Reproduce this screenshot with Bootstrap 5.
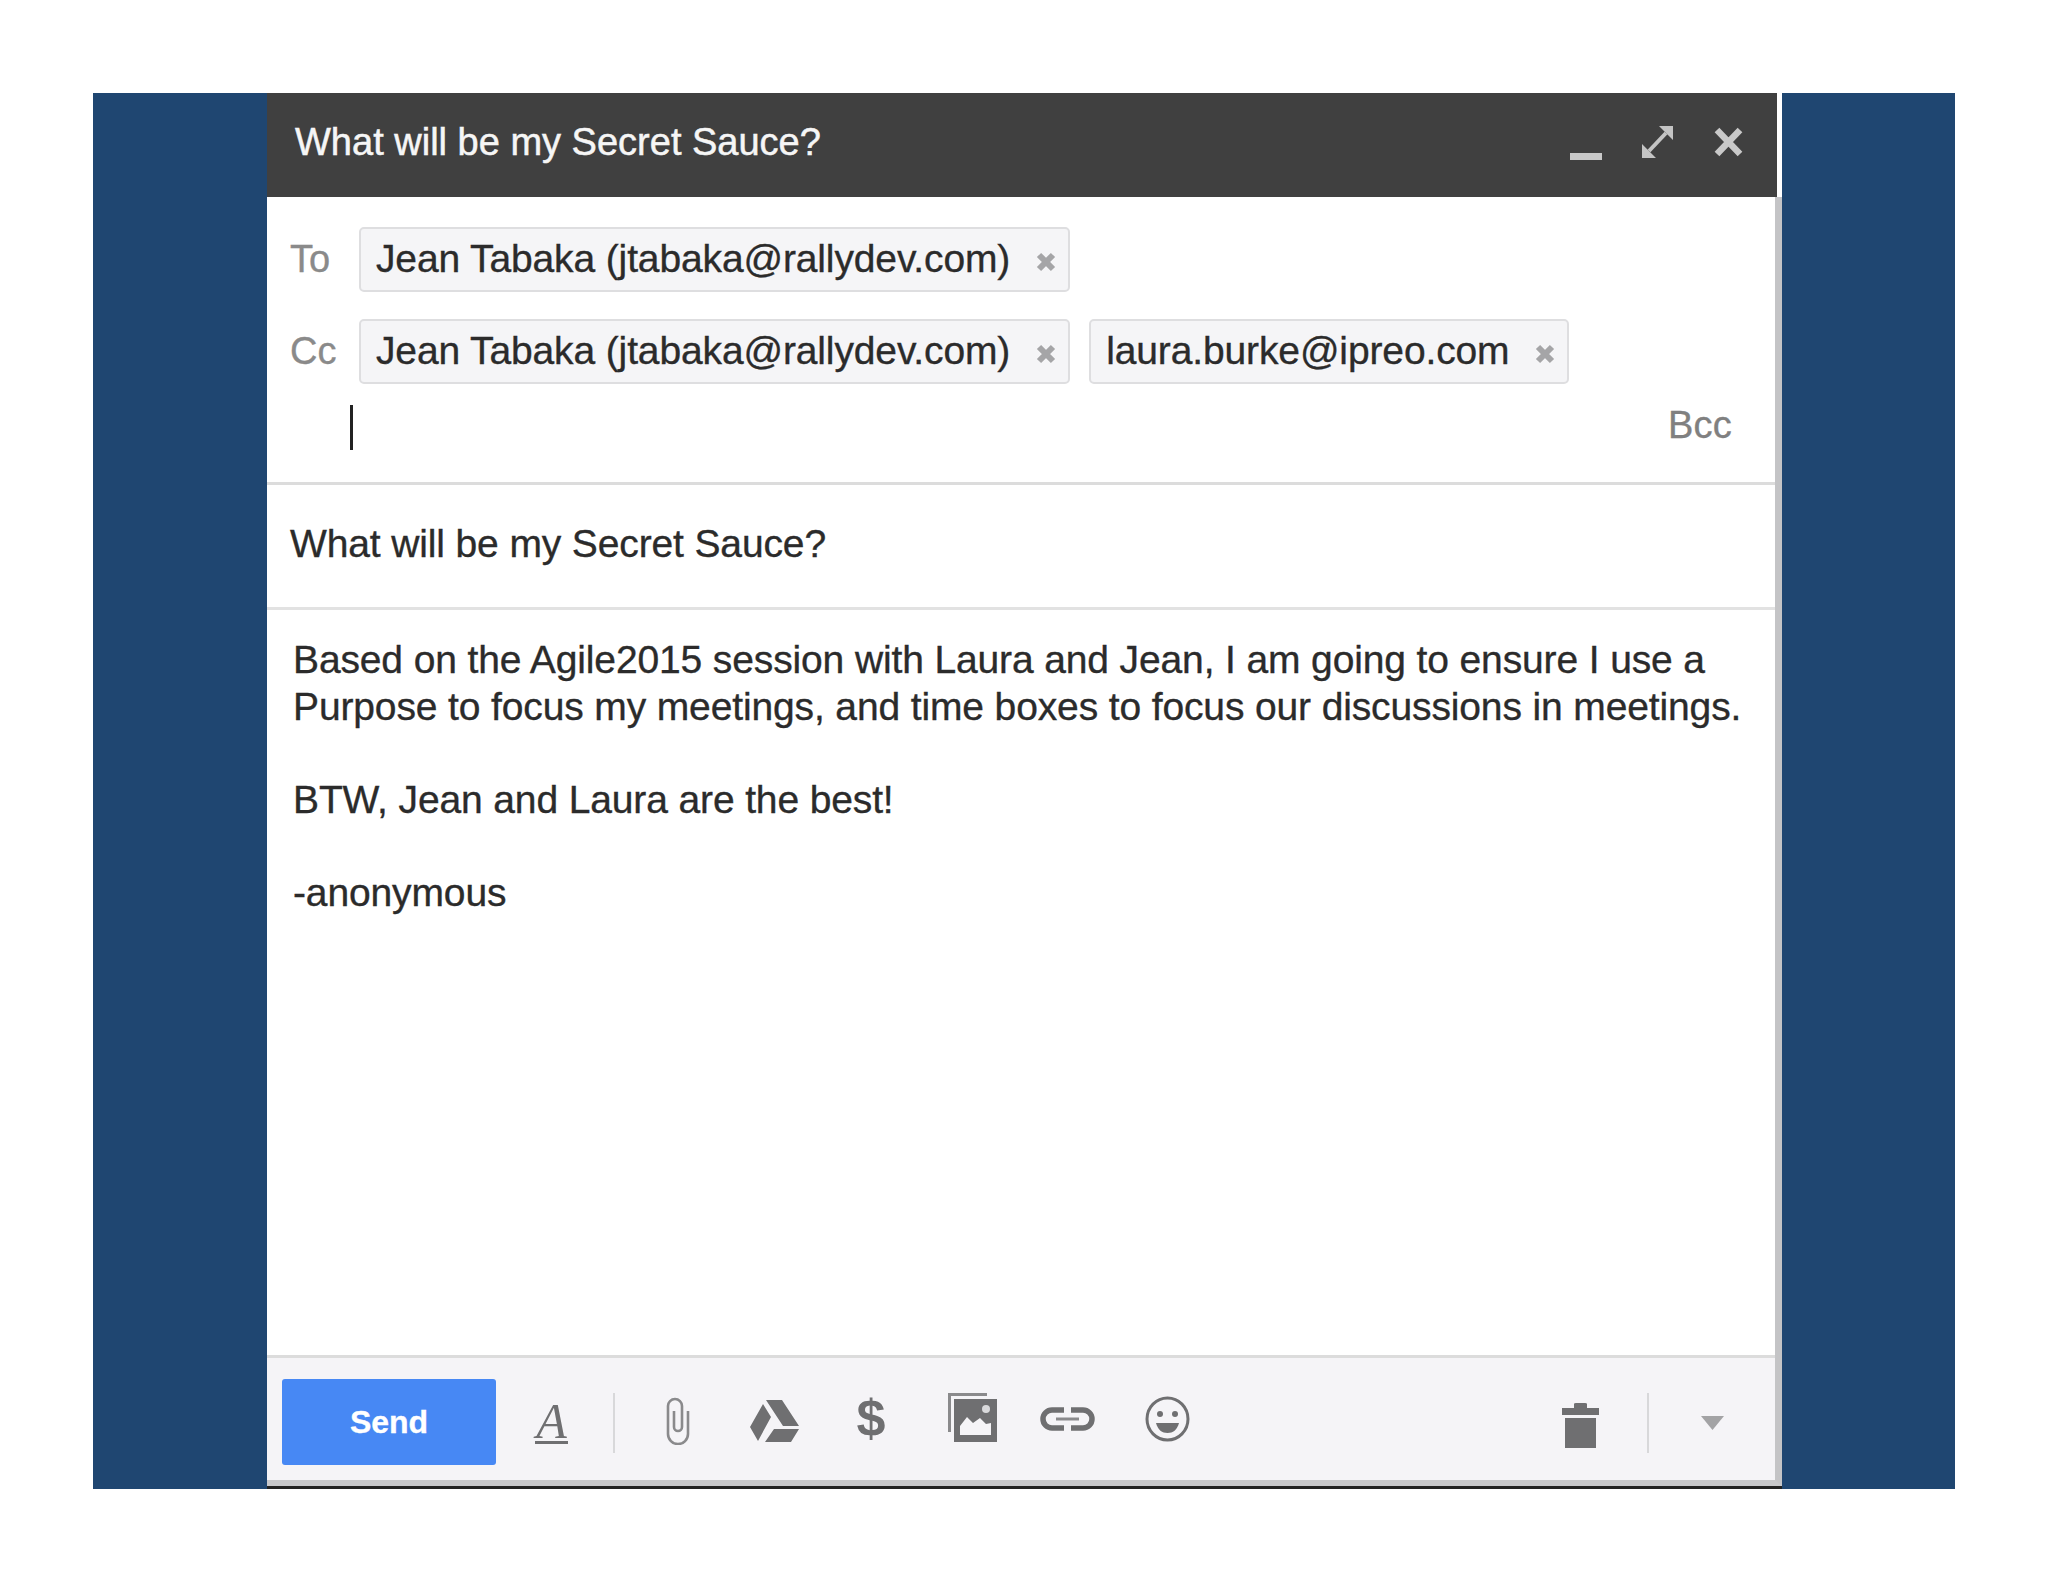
<!DOCTYPE html>
<html lang="en">
<head>
    <meta charset="UTF-8">
    <title>Compose</title>
    <link href="https://cdn.jsdelivr.net/npm/bootstrap@5.3.3/dist/css/bootstrap.min.css" rel="stylesheet">
    <style>
        html, body { background: #fff; }
        body { font-family: "Liberation Sans", Arial, sans-serif; color: #2b2b2b; padding: 93px 93px 0 93px; -webkit-text-stroke: .35px; }
        .stage { background: #1f4671; height: 1396px; width: 1862px; padding: 0 173px 0 174px; }
        .compose { height: 100%; background: #fff; border-bottom: 3px solid #222; }
        .title-bar { height: 104px; flex: none; background: #404040; color: #f6f6f6; font-size: 38px; padding: 0 34px 6px 28px; margin-right: 5px; -webkit-text-stroke: .5px; }
        .head-icons { gap: 40px; }
        .head-icons svg { display: block; }
        .ico-min { margin-top: 6px; }
        .ico-close { margin-left: 1px; }
        .main-pane { min-height: 0; border-right: 7px solid #c4c4c6; border-bottom: 6px solid #c8c8ca; }
        .field-wrap { height: 288px; flex: none; border-bottom: 3px solid #dcdcdc; padding: 30px 0 0 23px; position: relative; }
        .rcpt-row { height: 65px; margin-bottom: 27px; }
        .rcpt-label { width: 69px; color: #8a8a8a; font-size: 38px; }
        .chip { height: 65px; background: #f5f5f7; border: 2px solid #dedee0; border-radius: 5px; font-size: 39px; letter-spacing: -.13px; padding: 0 11px 0 15px; margin-right: 19px; }
        .chip svg { margin-left: 25px; margin-top: 4px; flex: none; }
        .caret-line { width: 3px; height: 45px; background: #222; margin-left: 60px; margin-top: -6px; }
        .bcc { position: absolute; right: 43px; top: 200px; font-size: 38px; color: #808080; letter-spacing: .2px; }
        .subject { height: 125px; flex: none; border-bottom: 3px solid #e2e2e2; padding: 0 0 4px 23px; font-size: 39px; letter-spacing: -.13px; }
        .body-text { height: 748px; flex: none; padding: 27px 20px 0 26px; font-size: 39px; line-height: 46.5px; letter-spacing: -.13px; white-space: pre-line; border-bottom: 3px solid #dcdcdc; }
        .tool-bar { background: #f5f4f7; padding: 0 51px 0 15px; }
        .send-btn { width: 214px; height: 86px; flex: none; background: #4788f4; border: 0; border-radius: 3px; color: #fff; font-size: 32px; font-weight: 700; margin-top: 5px; padding: 0; }
        .send-btn:hover { background: #4788f4; color: #fff; }
        .tool-sep { width: 2px; height: 60px; flex: none; background: #d8d8da; margin-top: 7px; }
        .tool-ico { fill: #6f6f71; flex: none; display: block; }
        .ico-font { width: 33px; margin-left: 39px; margin-top: 7px; font-family: "Liberation Serif", serif; font-style: italic; font-size: 50px; line-height: 40px; color: #6f6f71; border-bottom: 3px solid #6f6f71; text-align: center; -webkit-text-stroke: 0; }
        .sep-a { margin-left: 45px; }
        .ico-clip { margin-left: 50px; margin-top: 3px; }
        .ico-drive { margin-left: 59px; margin-top: 3px; }
        .ico-dollar { width: 30px; margin-left: 57px; margin-top: -2px; font-weight: 700; font-size: 52px; line-height: 52px; text-align: center; color: #6f6f71; -webkit-text-stroke: 0; }
        .ico-image { margin-left: 62px; margin-top: -4px; }
        .ico-link { margin-left: 43px; }
        .ico-smile { margin-left: 50px; }
        .ico-trash { margin-top: 12px; }
        .sep-b { margin-left: 48px; margin-right: 52px; }
        .ico-more { margin-top: 8px; }
    </style>
</head>
<body>
    <div class="stage">
        <div class="compose d-flex flex-column">
            <div class="title-bar d-flex align-items-center justify-content-between">
                <span>What will be my Secret Sauce?</span>
                <span class="head-icons d-flex align-items-center">
                    <svg class="ico-min" width="32" height="32" viewBox="0 0 32 32"><rect x="0" y="24" width="32" height="7" fill="#c9c9c9"/></svg>
                    <svg width="31" height="32" viewBox="0 0 31 32"><path d="M17 0h14v14zM0 18l14 14H0z" fill="#c4c4c4"/><path d="M7 25L24 7" stroke="#c4c4c4" stroke-width="4"/></svg>
                    <svg class="ico-close" width="29" height="30" viewBox="0 0 29 30"><path d="M3 3l23 24M26 3L3 27" stroke="#c9c9c9" stroke-width="6.5" fill="none"/></svg>
                </span>
            </div>
            <div class="main-pane flex-grow-1 d-flex flex-column">
                <div class="field-wrap">
                    <div class="rcpt-row d-flex align-items-center">
                        <span class="rcpt-label">To</span>
                        <span class="chip d-flex align-items-center">Jean Tabaka (jtabaka@rallydev.com)<svg width="22" height="22" viewBox="0 0 22 22"><path d="M4 4l14 14M18 4L4 18" stroke="#a5a5a7" stroke-width="6" fill="none"/></svg></span>
                    </div>
                    <div class="rcpt-row d-flex align-items-center">
                        <span class="rcpt-label">Cc</span>
                        <span class="chip d-flex align-items-center">Jean Tabaka (jtabaka@rallydev.com)<svg width="22" height="22" viewBox="0 0 22 22"><path d="M4 4l14 14M18 4L4 18" stroke="#a5a5a7" stroke-width="6" fill="none"/></svg></span>
                        <span class="chip d-flex align-items-center">laura.burke@ipreo.com<svg width="22" height="22" viewBox="0 0 22 22"><path d="M4 4l14 14M18 4L4 18" stroke="#a5a5a7" stroke-width="6" fill="none"/></svg></span>
                    </div>
                    <div class="caret-line"></div>
                    <span class="bcc">Bcc</span>
                </div>
                <div class="subject d-flex align-items-center">What will be my Secret Sauce?</div>
                <div class="body-text">Based on the Agile2015 session with Laura and Jean, I am going to ensure I use a
Purpose to focus my meetings, and time boxes to focus our discussions in meetings.

BTW, Jean and Laura are the best!

-anonymous</div>
                <div class="tool-bar flex-grow-1 d-flex align-items-center">
                    <button class="btn send-btn" type="button">Send</button>
                    <span class="ico-font">A</span>
                    <span class="tool-sep sep-a"></span>
                    <svg class="tool-ico ico-clip" width="26" height="48" viewBox="0 0 26 48"><path d="M9 14v16a4 4 0 0 0 8 0V9a7 7 0 0 0-14 0v28a10 10 0 0 0 20 0V14" fill="none" stroke="#8a8a8c" stroke-width="2.6"/></svg>
                    <svg class="tool-ico ico-drive" width="49" height="42" viewBox="0 0 49 42"><path d="M16 0h16l17 26H33zM13 4l8 13L8 41 0 27zM24 29h25l-8 13H15z"/></svg>
                    <span class="ico-dollar">$</span>
                    <svg class="tool-ico ico-image" width="49" height="49" viewBox="0 0 49 49"><path d="M0 0h39v3H3v36H0z" fill="#8a8a8c"/><rect x="6" y="6" width="43" height="43"/><path d="M12 42V33l7-9 6 6 7-5 6 6 5-1v12z" fill="#f5f4f7"/><circle cx="38" cy="16" r="4" fill="#d9d9db"/></svg>
                    <svg class="tool-ico ico-link" width="55" height="24" viewBox="0 0 55 24"><path d="M24 3H12a9 9 0 0 0 0 18h12M31 3h12a9 9 0 0 1 0 18H31" fill="none" stroke="#6f6f71" stroke-width="5.500"/><path d="M16 12h23" stroke="#8a8a8c" stroke-width="3"/></svg>
                    <svg class="tool-ico ico-smile" width="45" height="46" viewBox="0 0 45 46"><ellipse cx="22.500" cy="23" rx="20.500" ry="21" fill="none" stroke="#6f6f71" stroke-width="3"/><circle cx="15" cy="18" r="3"/><circle cx="30" cy="18" r="3"/><path d="M11 27h23c-2 7-6 10-11.500 10S13 34 11 27z"/></svg>
                    <svg class="tool-ico ico-trash ms-auto" width="37" height="45" viewBox="0 0 37 45"><path d="M0 5h12V1q0-1 2-1h9q2 0 2 1v4h12v7H0zM3 15h31v30H3z"/></svg>
                    <span class="tool-sep sep-b"></span>
                    <svg class="ico-more flex-none" width="23" height="14" viewBox="0 0 23 14"><path d="M0 0h23L11.500 14z" fill="#a3a3a5"/></svg>
                </div>
            </div>
        </div>
    </div>
    <script src="https://cdn.jsdelivr.net/npm/bootstrap@5.3.3/dist/js/bootstrap.bundle.min.js"></script>
</body>
</html>
